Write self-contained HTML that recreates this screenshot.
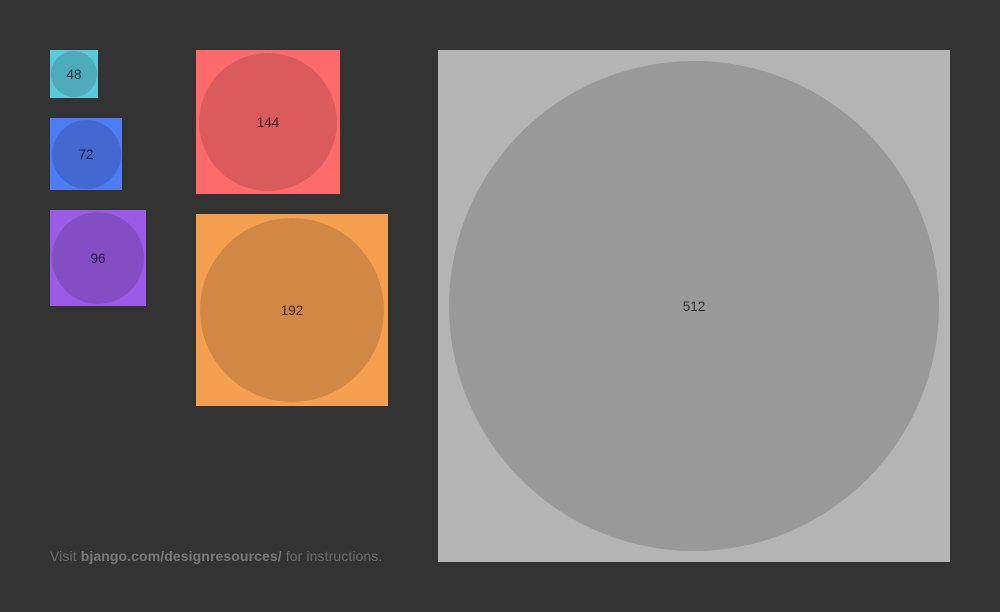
<!DOCTYPE html>
<html><head><style>
body{margin:0;width:1000px;height:612px;background:#333;position:relative;overflow:hidden;font-family:"Liberation Sans",sans-serif}
.b{position:absolute;display:flex;align-items:center;justify-content:center}
.c{position:absolute;border-radius:50%;background:rgba(0,0,0,0.15);display:flex;align-items:center;justify-content:center;font-size:13.5px;color:rgba(0,0,0,0.7)}
.f{position:absolute;left:50px;top:548px;font-size:14px;color:#6e6e6e;letter-spacing:0.1px}
.f b{color:#7a7a7a}
</style></head><body>
<div class="b" style="left:50px;top:50px;width:48px;height:48px;background:#5bc9dc"><div class="c" style="width:46px;height:46px;left:1px;top:1px">48</div></div>
<div class="b" style="left:50px;top:118px;width:72px;height:72px;background:#4d7cf4"><div class="c" style="width:69px;height:69px;left:1.5px;top:1.5px">72</div></div>
<div class="b" style="left:50px;top:210px;width:96px;height:96px;background:#9a5ce6"><div class="c" style="width:92px;height:92px;left:2px;top:2px">96</div></div>
<div class="b" style="left:196px;top:50px;width:144px;height:144px;background:#ff6b6b"><div class="c" style="width:138px;height:138px;left:3px;top:3px">144</div></div>
<div class="b" style="left:196px;top:214px;width:192px;height:192px;background:#f5a050"><div class="c" style="width:184px;height:184px;left:4px;top:4px">192</div></div>
<div class="b" style="left:438px;top:50px;width:512px;height:512px;background:#b4b4b4"><div class="c" style="width:490px;height:490px;left:11px;top:11px">512</div></div>
<div class="f">Visit <b>bjango.com/designresources/</b> for instructions.</div>
</body></html>
